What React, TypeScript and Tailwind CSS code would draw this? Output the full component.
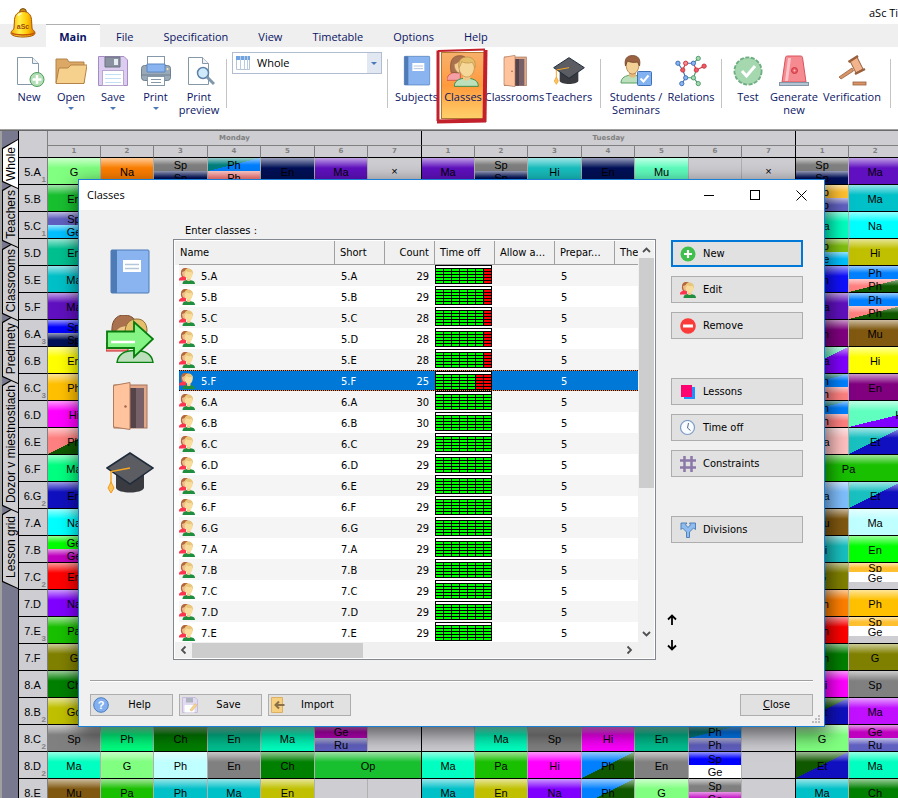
import { Fragment, type ReactNode } from 'react'
import clsx from 'clsx'

/* ---------- icons ---------- */

type IconProps = { className?: string }

function BellLogo() {
  return (
    <svg viewBox="0 0 26 30" className="h-[30px] w-[26px]">
      <defs>
        <linearGradient id="bell" x1="0" x2="1">
          <stop offset="0" stopColor="#f7a800" />
          <stop offset="0.35" stopColor="#fff04a" />
          <stop offset="0.7" stopColor="#ffc400" />
          <stop offset="1" stopColor="#d87400" />
        </linearGradient>
      </defs>
      <circle cx="13" cy="4" r="3.4" fill="#c98a14" stroke="#7a4a10" />
      <path d="M13 3.500c-5 0-8 3-8.500 8L4 20c0 2-3 2.500-3 5 0 2.500 5 4 12 4s12-1.500 12-4c0-2.500-3-3-3-5l-.500-8.500c-.500-5-3.500-8-8.500-8z" fill="url(#bell)" stroke="#a85508" />
      <path d="M2 25c3 2.500 19 2.500 22 0" fill="none" stroke="#c8500a" strokeWidth="1.500" />
      <path d="M8 8c1-2 2-2.500 3.500-2.500" fill="none" stroke="#fffbd0" strokeWidth="1.500" />
      <text x="13" y="21" textAnchor="middle" fontSize="7" fontWeight="700" fill="#a04a10" fontFamily="Liberation Sans, sans-serif">
        aSc
      </text>
    </svg>
  )
}

function BookIcon({ className }: IconProps) {
  return (
    <svg viewBox="0 0 48 48" className={className}>
      <rect x="5" y="2" width="38" height="43" rx="1" fill="#8ab4f0" stroke="#4a7ab8" />
      <rect x="5" y="2" width="6" height="43" fill="#4e7ab5" />
      <rect x="17" y="12" width="18" height="12" fill="#fff" />
      <path d="M19 16.500h14M19 20.500h14" stroke="#b4c6dc" strokeWidth="1.500" />
    </svg>
  )
}

function PeopleIcon({ className }: IconProps) {
  return (
    <svg viewBox="0 0 48 48" className={className}>
      <path d="M0 36c1-7 7-9 12-10h8v12H0z" fill="#f5a0a4" stroke="#c83c3c" />
      <path d="M6 26C3 8 9 1 19 1c8 0 12 4 12 10L18 27z" fill="#a9714d" stroke="#7e4e33" />
      <path d="M11 14c3-1 6-3 8-5v18c-5-1-8-6-8-13z" fill="#f3cd95" stroke="#b08450" strokeWidth="0.800" />
      <path d="M11 47c0-8 6-11 14-12h8c8 1 14 4 14 12z" fill="#bce0bc" stroke="#3f8f4b" strokeWidth="1.500" />
      <path d="M24 28h11v8c-2 3-9 3-11 0z" fill="#efc889" />
      <path d="M18 18C17 9 22 4 30 4s13 5 11 14c0 9-5 15-11 15s-12-6-12-15z" fill="#f6d79a" stroke="#b98e46" />
      <path d="M18 19C16 8 22 3 30 3s14 5 12 16c-2-3-3-6-4-8-6 2-13 1-16-1-1 4-2 6-4 9z" fill="#e6bf6d" stroke="#b98e46" />
    </svg>
  )
}

// 16px version: no outlines, stronger colours
function PeopleSmallIcon() {
  return (
    <svg viewBox="0 0 16 16" className="size-4 shrink-0">
      <path d="M2 7C1.500 2 3 0 6 0c2 0 3.500.500 4 2L6 9H3z" fill="#b5683c" />
      <path d="M3 4l3-1v6C4 9 3 7 3 4z" fill="#f0b88c" />
      <path d="M0 11.500C0 9.500 2.500 9 3.500 8.500L7 9v3.500H0z" fill="#ff3550" />
      <path d="M3.500 16c0-3 2-3.500 4.500-4h3c2.500.500 5 1 5 4z" fill="#1f8f3f" />
      <path d="M8 9h3.500v3.500c-1 .700-2.500.700-3.500 0z" fill="#efc889" />
      <path d="M5.500 5C5.500 2.500 7 1 9.500 1s4.500 1.500 4.200 4.500c0 3-1.700 5.500-4 5.500S5.500 8 5.500 5z" fill="#f8dc9c" />
      <path d="M5.500 7C4.800 3 6.500.500 9.500.500S14.500 3 13.800 6.500L12.500 3.800C10.500 4.500 8.500 4 7 3.300z" fill="#e8c57a" />
    </svg>
  )
}

function ClassesArrowIcon({ className }: IconProps) {
  return (
    <svg viewBox="0 0 48 48" className={className}>
      <path d="M0 36v-8h22v8z" fill="#f5a0a4" stroke="#c81e1e" />
      <path d="M6 18C5 6 10 0 18 0c5 0 9 2 11 5l-5 13z" fill="#a9714d" stroke="#7e4e33" />
      <path d="M10 18c0-3 3-6 10-7l4 7z" fill="#efc889" />
      <path d="M19 18c0-9 4-14 12-14 6 0 10 4 10 12l-4 12H22z" fill="#e6bf6d" stroke="#8f6c30" />
      <path d="M11 47.500c1-8 8-12 18-12s17 4 18 12z" fill="#bce0bc" stroke="#0a820f" strokeWidth="1.500" />
      <path d="M1 16.500h27V7l19 17-19 18v-9H1z" fill="#84f584" stroke="#087a0c" strokeWidth="1.800" />
      <path d="M5 27h24" stroke="#fff" strokeWidth="2.500" />
    </svg>
  )
}

function DoorIcon({ className }: IconProps) {
  return (
    <svg viewBox="0 0 48 48" className={className}>
      <rect x="8" y="3" width="33" height="43" fill="#e0a888" stroke="#a8735a" />
      <rect x="23" y="6" width="15" height="40" fill="#786068" />
      <rect x="23" y="6" width="7" height="40" fill="#544449" />
      <path d="M7.500 3.500L24 .500v47l-16.500-2.500z" fill="#ffc39d" stroke="#b07a5c" />
      <circle cx="19.500" cy="24.500" r="1.200" fill="#a4634a" />
    </svg>
  )
}

function CapIcon({ className }: IconProps) {
  return (
    <svg viewBox="0 0 48 48" className={className}>
      <path d="M10 24v15c2 6 26 6 28 0V24z" fill="#3a3b40" />
      <path d="M1 19L24 4l23 15-23 16z" fill="#5b5d62" stroke="#1f2b3a" strokeWidth="1.500" />
      <path d="M24 19L5 22.500V34" fill="none" stroke="#f5a623" strokeWidth="1.500" />
      <path d="M5 33l3 6-3 5-3-5z" fill="#ffc35a" stroke="#f0981e" />
    </svg>
  )
}

function NewDocIcon() {
  return (
    <svg viewBox="0 0 32 32" className="size-8">
      <path d="M4.500 2.500h15l6 6v21h-21z" fill="#fff" stroke="#8498a8" />
      <path d="M19.500 2.500v6h6" fill="#eef2f5" stroke="#8498a8" />
      <circle cx="24" cy="24.500" r="7" fill="#b4deb4" stroke="#4f9c5f" />
      <path d="M24 20v9M19.500 24.500h9" stroke="#fff" strokeWidth="2.500" />
    </svg>
  )
}

function FolderIcon() {
  return (
    <svg viewBox="0 0 32 32" className="size-8">
      <path d="M1 28V4h11l2 3h15v21z" fill="#dba865" stroke="#b48348" />
      <path d="M1 28.500L4 13h9l3-3h16l-3 18.500z" fill="#f6d08d" stroke="#b48348" />
    </svg>
  )
}

function FloppyIcon({ className }: IconProps) {
  return (
    <svg viewBox="0 0 32 32" className={className}>
      <path d="M1.500 1.500H27l3.500 3.500v25.500h-29z" fill="#dccdf0" stroke="#a58cc4" />
      <path d="M8 2h15v10H8z" fill="#8a91a0" stroke="#6b7280" />
      <rect x="17" y="4" width="4" height="6" fill="#e8edf4" />
      <rect x="5.500" y="15.500" width="21" height="15" fill="#fff" stroke="#b8a8d0" />
      <path d="M8 19.500h16M8 23.500h16M8 27.500h16" stroke="#bfe0f5" />
    </svg>
  )
}

function PrinterIcon() {
  return (
    <svg viewBox="0 0 32 32" className="size-8">
      <rect x="1.500" y="10.500" width="29" height="15" rx="3" fill="#9aa9b8" stroke="#6f8090" />
      <rect x="7.500" y="1.500" width="17" height="9" fill="#fff" stroke="#8498a8" />
      <path d="M7 9h18v8H7z" fill="#8ab4f0" stroke="#5a88c4" />
      <path d="M1 20h30" stroke="#6f8090" />
      <rect x="7.500" y="21.500" width="17" height="9" fill="#fff" stroke="#8498a8" />
      <path d="M11 24.500h10M11 27.500h10" stroke="#8498a8" />
      <circle cx="27.500" cy="14" r="1" fill="#ffe9a0" />
    </svg>
  )
}

function PreviewIcon() {
  return (
    <svg viewBox="0 0 32 32" className="size-8">
      <path d="M5.500 2.500h14l6 6v21h-20z" fill="#fff" stroke="#8498a8" />
      <path d="M19.500 2.500v6h6" fill="#eef2f5" stroke="#8498a8" />
      <circle cx="20" cy="18" r="5.500" fill="#cfeafc" stroke="#5e82a6" strokeWidth="1.500" />
      <path d="M24 22l7 7" stroke="#7f97ad" strokeWidth="3" />
    </svg>
  )
}

function StudentIcon() {
  return (
    <svg viewBox="0 0 32 32" className="size-8">
      <path d="M1 28c0-6 5-7 9-8h4c4 1 9 2 9 8z" fill="#bce0bc" stroke="#58a065" />
      <path d="M9 15h7v6c-2 2-5 2-7 0z" fill="#e3b878" />
      <path d="M6 9c0-5 3-7 6.500-7S19 4 19 9c0 6-3 10-6.500 10S6 15 6 9z" fill="#f3d095" stroke="#a87c44" strokeWidth="0.800" />
      <path d="M5.500 11C4 4 7 .500 12.500.500S21 4 19.500 11L17.500 7c-4 1-8 0-10-1z" fill="#9a6240" stroke="#6f432a" strokeWidth="0.800" />
      <rect x="17.500" y="16.500" width="14" height="14" rx="1" fill="#82b2f2" stroke="#3f72b5" />
      <path d="M20.500 23.500l3 3 5-6" fill="none" stroke="#fff" strokeWidth="2" />
    </svg>
  )
}

function RelationsIcon() {
  const nodes: [number, number, string, string][] = [
    [3, 8, '#8ab4f0', '#3f72b5'], [11, 8, '#f58a90', '#c83a44'], [19, 8, '#8ab4f0', '#3f72b5'], [24, 3, '#a6d8b0', '#4f9c6f'],
    [30, 11, '#f05a64', '#c83a44'], [8, 15, '#f05a64', '#c83a44'], [22, 15, '#f05a64', '#c83a44'], [11, 23, '#8ab4f0', '#3f72b5'],
    [19, 23, '#a6d8b0', '#4f9c6f'], [7, 29, '#8ab4f0', '#3f72b5'], [24, 29, '#a6d8b0', '#4f9c6f'],
  ]
  return (
    <svg viewBox="0 0 33 32" className="size-8">
      <path d="M3 8l5 7M19 8h-8M11 23l-4 6M11 23l-3-8" fill="none" stroke="#3f72b5" strokeWidth="1.200" />
      <path d="M8 15l3-7M19 8l3 7M22 15l8-4" fill="none" stroke="#c83a44" strokeWidth="1.200" />
      <path d="M19 8l5-5M11 23h8l5 6M19 23l3-8" fill="none" stroke="#4f9c6f" strokeWidth="1.200" />
      {nodes.map(([x, y, fill, stroke]) => (
        <circle key={`${x}-${y}`} cx={x} cy={y} r="2.200" fill={fill} stroke={stroke} />
      ))}
    </svg>
  )
}

function TestIcon() {
  return (
    <svg viewBox="0 0 32 32" className="size-8">
      <circle cx="16" cy="16" r="13.500" fill="#9ed2aa" stroke="#6fae80" strokeWidth="2" strokeDasharray="4 1.500" />
      <circle cx="16" cy="16" r="12.500" fill="#a6d8b0" />
      <path d="M10 16l4.500 5L23 11" fill="none" stroke="#fff" strokeWidth="3" />
    </svg>
  )
}

function SirenIcon() {
  return (
    <svg viewBox="0 0 32 32" className="size-8">
      <path d="M4 27L7.500 2.500c0-1 1-1.500 2-1.500h13c1 0 2 .500 2 1.500L28 27z" fill="#f58a90" stroke="#d8545c" />
      <path d="M7 26l3-23h3l-3 23z" fill="#fbc4c8" />
      <circle cx="16.500" cy="15.500" r="3" fill="#ee5a62" stroke="#c83a44" />
      <circle cx="16.500" cy="15.500" r="1" fill="#fbc4c8" />
      <rect x="1.500" y="27.500" width="29" height="3" fill="#b4c4d2" stroke="#8296a8" />
    </svg>
  )
}

function GavelIcon() {
  return (
    <svg viewBox="0 0 32 32" className="size-8">
      <path d="M3 22l13-9 1.500 3L5 24z" fill="#d89468" stroke="#98603c" strokeWidth="0.800" />
      <path d="M14 6l7-4 6 12-7 4z" fill="#f2b48c" stroke="#98603c" />
      <path d="M12.500 7L22 1M19 19l10-5" stroke="#98603c" strokeWidth="2.500" />
      <rect x="17" y="27" width="13" height="3" fill="#d89468" stroke="#98603c" strokeWidth="0.800" />
    </svg>
  )
}

const smallIcons: Record<string, ReactNode> = {
  add: (
    <>
      <circle cx="8" cy="8" r="7.500" fill="#3fbf4c" />
      <path d="M8 4v8M4 8h8" stroke="#fff" strokeWidth="2.200" />
    </>
  ),
  remove: (
    <>
      <circle cx="8" cy="8" r="7.800" fill="#fb3a3a" />
      <path d="M3 8h10" stroke="#fff" strokeWidth="3" />
    </>
  ),
  lessons: (
    <>
      <path d="M4 3h11v12H4z" fill="#1e90ff" />
      <path d="M1 1h11v12H1z" fill="#ff0070" />
    </>
  ),
  clock: (
    <>
      <circle cx="7.500" cy="7.500" r="7" fill="#f8fbff" stroke="#7c9cc8" strokeWidth="1.200" />
      <path d="M8.500 3L7.500 8l3 2.500" fill="none" stroke="#54688c" />
    </>
  ),
  grid: <path d="M4.500 0v16M11.500 0v16M0 4.500h16M0 11.500h16" stroke="#8b78a8" strokeWidth="2.500" />,
  divisions: (
    <path d="M6.500 15.500V10L2.500 6 1 7.500V1h6L5.500 2.800 8 5.500l2.500-2.700L9.500 1H15.500v6.500L13.500 6l-4 4v5.500z" fill="#8fbcf0" stroke="#4878b0" strokeWidth="0.900" />
  ),
  help: (
    <>
      <circle cx="8" cy="8" r="7.300" fill="#82b0ee" stroke="#4a7cc0" />
      <text x="8" y="12" textAnchor="middle" fontSize="11" fontWeight="700" fill="#fff" fontFamily="Liberation Sans, sans-serif">?</text>
    </>
  ),
  save: (
    <>
      <path d="M.500.500H13l2.500 2v13H.500z" fill="#e2daf0" stroke="#c8bcdc" />
      <path d="M4 1h7v4.500H4z" fill="#aeb4c0" />
      <path d="M2.500 8h10v7.500h-10z" fill="#fff" />
      <path d="M8 13l5-6.500 2 1.500-5 6z" fill="#f5d590" stroke="#d8b060" strokeWidth="0.500" />
    </>
  ),
  import: (
    <>
      <path d="M.500.500h11v15H.500z" fill="#f7cf80" stroke="#ddb060" />
      <path d="M4 8h9.500M8 4.500L4.500 8 8 11.500" fill="none" stroke="#8a7048" strokeWidth="2" />
    </>
  ),
}

function SmallIcon({ name }: { name: string }) {
  if (name === 'people') return <PeopleSmallIcon />
  return (
    <svg viewBox="0 0 16 16" className="size-4 shrink-0">
      {smallIcons[name]}
    </svg>
  )
}

function Chevron({ className }: IconProps) {
  return (
    <svg viewBox="0 0 9 6" className={clsx('h-[6px] w-[9px]', className)}>
      <path d="M1 5l3.500-3.500L8 5" fill="none" stroke="#505050" strokeWidth="1.800" />
    </svg>
  )
}

/* ---------- ribbon ---------- */

const menu = ['File', 'Specification', 'View', 'Timetable', 'Options', 'Help']

function RibbonButton({ icon, label, width, arrow }: { icon: ReactNode; label: string; width: string; arrow?: boolean }) {
  return (
    <button className={clsx('flex shrink-0 flex-col items-center text-center leading-[13px]', width)}>
      {icon}
      <span className="mt-[3px] whitespace-pre">{label}</span>
      {arrow && <span className="mt-1 border-x-[3px] border-t-[3px] border-x-transparent border-t-[#4a78b8]" />}
    </button>
  )
}

function Separator() {
  return <div className="mx-[5px] mt-1 h-[49px] w-px shrink-0 bg-[#c4c4c4]" />
}

function Ribbon() {
  return (
    <header className="relative h-[130px] overflow-hidden border-b border-[#a0a0a0] bg-white font-['Open_Sans',sans-serif] text-[11px] text-[#0a1464]">
      <div className="absolute top-2 left-[10px]">
        <BellLogo />
      </div>
      <div className="flex h-6 items-center justify-end overflow-hidden pt-[2px]">
        <span className="w-[29px] whitespace-nowrap text-black">aSc Timetables</span>
      </div>
      <nav className="flex h-[23px] items-stretch bg-[#efefef] pl-[46px]">
        <a href="#main" className="flex w-[54px] items-center justify-center border-t border-[#b0b0b0] bg-white pt-[2px] font-bold">
          Main
        </a>
        <div className="flex items-center gap-[30px] pt-[3px] pl-4">
          {menu.map((item) => (
            <a key={item} href={`#${item.toLowerCase()}`}>
              {item}
            </a>
          ))}
        </div>
      </nav>
      <div className="flex items-start pt-2 pl-2">
        <RibbonButton icon={<NewDocIcon />} label="New" width="w-[42px]" />
        <RibbonButton icon={<FolderIcon />} label="Open" width="w-[42px]" arrow />
        <RibbonButton icon={<FloppyIcon className="size-8" />} label="Save" width="w-[42px]" arrow />
        <RibbonButton icon={<PrinterIcon />} label="Print" width="w-[43px]" arrow />
        <RibbonButton icon={<PreviewIcon />} label={'Print\npreview'} width="w-[44px]" />
        <Separator />
        <label className="relative -mt-[3px] flex h-[22px] w-[150px] shrink-0 items-center border border-[#b0bcd0]">
          <svg viewBox="0 0 14 14" className="absolute left-[3px] size-[14px]">
            <path d="M.500.500h13v13H.500z" fill="#fff" stroke="#b8c4d4" />
            <path d="M0 0h14v4H0z" fill="#6fa4e0" />
            <path d="M4.500 0v14M8.500 0v14M11.500 0v14" stroke="#b8cce4" />
          </svg>
          <select aria-label="View" className="h-full w-full appearance-none bg-transparent pl-6 text-black outline-none">
            <option>Whole</option>
          </select>
          <span className="pointer-events-none absolute inset-y-0 right-0 flex w-[14px] items-center justify-center bg-[#e2e8f2]">
            <span className="border-x-[3px] border-t-[3px] border-x-transparent border-t-[#4a78b8]" />
          </span>
        </label>
        <Separator />
        <RibbonButton icon={<BookIcon className="size-8" />} label="Subjects" width="w-[47px]" />
        <div className="relative -mt-[3px] h-[67px] w-[46px] shrink-0 px-px">
          <div className="flex h-full justify-center border border-[#b07830] bg-linear-to-b from-[#f7b06a] via-[#ff9a3c] via-50% to-[#ffcf6a] pt-[2px]">
            <RibbonButton icon={<PeopleIcon className="size-8" />} label="Classes" width="w-[42px]" />
          </div>
          <svg viewBox="0 0 52 76" className="pointer-events-none absolute -top-1 -left-1 h-[76px] w-[52px]">
            <path d="M2 3L49 1.500" stroke="#c2202a" strokeWidth="2" />
            <path d="M2 2.500V73" stroke="#c2202a" strokeWidth="3" />
            <path d="M49.500 2L48.500 74" stroke="#c2202a" strokeWidth="4" />
            <path d="M1 73.500L50 72.500" stroke="#c2202a" strokeWidth="4" />
          </svg>
        </div>
        <RibbonButton icon={<DoorIcon className="size-8" />} label="Classrooms" width="w-[57px]" />
        <RibbonButton icon={<CapIcon className="size-8" />} label="Teachers" width="w-[52px]" />
        <Separator />
        <RibbonButton icon={<StudentIcon />} label={'Students /\nSeminars'} width="w-[60px]" />
        <RibbonButton icon={<RelationsIcon />} label="Relations" width="w-[50px]" />
        <Separator />
        <RibbonButton icon={<TestIcon />} label="Test" width="w-[42px]" />
        <RibbonButton icon={<SirenIcon />} label={'Generate\nnew'} width="w-[50px]" />
        <RibbonButton icon={<GavelIcon />} label="Verification" width="w-[66px]" />
        <Separator />
      </div>
    </header>
  )
}

/* ---------- timetable behind the dialog ---------- */

const colors: Record<string, string> = {
  lime: 'bg-[#80ff80]',
  orange: 'bg-[#ff8000]',
  gray: 'bg-[#808080]',
  navy: 'bg-[#001058]',
  salmon: 'bg-[#ff8080]',
  purple: 'bg-[#6010c0]',
  teal: 'bg-[#18c0c0]',
  mint: 'bg-[#60ffc0]',
  green: 'bg-[#18c030]',
  amber: 'bg-[#ffc030]',
  slate: 'bg-[#6060c0]',
  sea: 'bg-[#00c0c8]',
  sky: 'bg-[#00c0ff]',
  aqua: 'bg-[#00ffc0]',
  cyan: 'bg-[#00ffff]',
  jade: 'bg-[#00c090]',
  grass: 'bg-[#80c010]',
  olive: 'bg-[#808000]',
  mustard: 'bg-[#c0c000]',
  royal: 'bg-[#1010ff]',
  azure: 'bg-[#0080ff]',
  blue: 'bg-[#0000ff]',
  plum: 'bg-[#800080]',
  brown: 'bg-[#805810]',
  yellow: 'bg-[#ffff00]',
  gold: 'bg-[#ffc000]',
  magenta: 'bg-[#ff00ff]',
  pink: 'bg-[#ffc0c0]',
  spring: 'bg-[#00ff80]',
  leaf: 'bg-[#18c000]',
  ink: 'bg-[#1010c0]',
  baby: 'bg-[#80c0ff]',
  ice: 'bg-[#c0ffff]',
  neon: 'bg-[#00ff00]',
  fuchsia: 'bg-[#c000c0]',
  red: 'bg-[#ff0000]',
  violet: 'bg-[#8000ff]',
  forest: 'bg-[#008000]',
  orchid: 'bg-[#c010ff]',
  white: 'bg-white',
  // two-tone lessons, cut from the lower left to the upper right corner
  tealAzure: 'bg-linear-to-br from-[#008080] from-50% to-[#0080ff] to-50%',
  salmonPine: 'bg-linear-to-br from-[#ff8080] from-50% to-[#105800] to-50%',
  mintViolet: 'bg-linear-to-br from-[#60ffc0] from-50% to-[#8000ff] to-50%',
  tealInk: 'bg-linear-to-br from-[#18c0c0] from-50% to-[#1010c0] to-50%',
  pineInk: 'bg-linear-to-br from-[#105800] from-50% to-[#1010c0] to-50%',
  azurePine: 'bg-linear-to-br from-[#0080ff] from-50% to-[#105800] to-50%',
}

// name, group count, lessons as "Text:color", halves joined by "/", "*n" spans n periods
const rows: [string, string, string][] = [
  ['5.A', '1', 'G:lime Na:orange Sp:gray/Sp:navy Ph:tealAzure/Ph:salmon En:navy Ma:purple × Ma:purple Sp:gray/Sp:navy Hi:teal En:navy Mu:mint - × Sp:gray/Sp:navy Ma:purple -'],
  ['5.B', '', 'En:green -*13 Sp:amber/Sp:slate Ma:sea -'],
  ['5.C', '1', 'Sp:slate/Ge:sky -*13 Ma:aqua Na:cyan -'],
  ['5.D', '', 'En:jade -*13 Sp:grass/Ge:sky Hi:mustard -'],
  ['5.E', '', 'Ma:sea -*13 En:royal Ph:azure/Ph:salmonPine -'],
  ['5.F', '', 'Ma:purple -*13 Ma:purple Ph:azure/Ph:salmonPine -'],
  ['6.A', '3', 'Sp:blue/Sp:navy -*13 En:plum Mu:brown -'],
  ['6.B', '', 'En:yellow -*13 Ma:mintViolet Hi:yellow -'],
  ['6.C', '3', 'Ph:gold -*13 Ph:tealAzure/Ph:salmon En:plum -'],
  ['6.D', '', 'Hi:magenta -*13 Ph:tealAzure/Ph:salmon Hv:mintViolet*2'],
  ['6.E', '', 'Ph:salmonPine -*13 Ma:pink Et:tealInk -'],
  ['6.F', '', 'Ma:spring -*13 Pa:leaf*2 -'],
  ['6.G', '2', 'En:ink -*13 Ma:baby Et:tealInk -'],
  ['7.A', '', 'Na:cyan -*13 Mu:brown Ma:ice -'],
  ['7.B', '', 'Ge:neon/Ge:fuchsia -*13 Hi:teal En:neon -'],
  ['7.C', '2', 'En:red -*13 G:olive Sp:amber/Ge:white/- -'],
  ['7.D', '', 'Na:violet -*13 En:orange Ph:gold -'],
  ['7.E', '3', 'Pa:leaf -*13 En:red Sp:amber/Ge:white/- -'],
  ['7.F', '', 'G:olive -*13 Ch:forest G:olive -'],
  ['8.A', '', 'Ch:forest -*13 Hi:magenta Sp:gray -'],
  ['8.B', '2', 'Go:mustard -*13 Et:pineInk Ma:orchid -'],
  ['8.C', '2', 'Sp:gray Ph:spring Ch:forest En:jade Ma:aqua Ge:fuchsia/Ru:slate - - Ma:aqua Sp:gray Hi:magenta En:jade Ph:tealAzure/Ph:slate - G:lime Ge:fuchsia/Ru:slate -'],
  ['8.D', '2', 'Ma:aqua G:lime Ph:ice En:gray Ch:forest Op:green*2 Ma:aqua Pa:leaf Hi:magenta Ph:azurePine En:gray Sp:blue/Ge:white - Et:pineInk Ma:aqua -'],
  ['8.E', '', 'Mu:brown Pa:leaf Ph:sea Ma:sea En:mustard - - Ma:sea En:mustard Na:violet Ph:azurePine G:lime Sp:gray/Ge:fuchsia - Ma:sea Ch:forest -'],
]

const dayCols = ['w-[53px]', 'w-[53px]', 'w-[54px]', 'w-[53px]', 'w-[54px]', 'w-[53px]', 'w-[54px]']
const periods = [1, 2, 3, 4, 5, 6, 7]

function Lesson({ text }: { text: string }) {
  const [name, color] = text.split(':')
  if (!color) return <div className="flex min-h-0 flex-1 items-center justify-center">{name === '-' ? '' : name}</div>
  return (
    <div className={clsx('relative flex min-h-0 flex-1 items-center justify-center pt-[2px]', colors[color])}>
      {color !== 'white' && <span className="absolute inset-x-0 top-0 h-[10px] max-h-1/2 bg-linear-to-b from-white/60 to-transparent" />}
      <span className="relative">{name}</span>
    </div>
  )
}

function Cells({ spec }: { spec: string }) {
  let col = 0
  return spec.split(' ').map((cell, i) => {
    const [body, span] = cell.split('*')
    col += Number(span ?? 1)
    return (
      <td key={i} colSpan={Number(span ?? 1)} className={clsx('border-r border-b border-b-black p-0', col % 7 === 0 ? 'border-r-black' : 'border-r-[#b0b0b0]')}>
        <div className="flex h-[26px] flex-col overflow-hidden">
          {body.split('/').map((part, j) => (
            <Lesson key={j} text={part} />
          ))}
        </div>
      </td>
    )
  })
}

const tabs = [
  { label: 'Whole', size: 'z-6 h-[50px]', fill: 'bg-white' },
  { label: 'Teachers', size: 'z-5 -mt-2 h-[67px]', fill: 'bg-[#cdcdd2]' },
  { label: 'Classrooms', size: 'z-4 -mt-2 h-[81px]', fill: 'bg-[#cdcdd2]' },
  { label: 'Predmety', size: 'z-3 -mt-2 h-[71px]', fill: 'bg-[#cdcdd2]' },
  { label: 'Dozor v miestnostiach', size: 'z-2 -mt-2 h-[137px]', fill: 'bg-[#cdcdd2]' },
  { label: 'Lesson grid', size: 'z-1 -mt-2 h-[84px]', fill: 'bg-[#cdcdd2]' },
]

function SideTabs() {
  return (
    <div className="isolate flex w-[19px] shrink-0 flex-col border-r border-l-2 border-r-black border-l-[#a0a0a0] bg-[#78798e] pt-2">
      {tabs.map((tab) => (
        <button key={tab.label} className={clsx('relative shrink-0 bg-black [clip-path:polygon(100%_0,100%_100%,0_calc(100%-7px),0_9px)]', tab.size)}>
          <span className={clsx('absolute inset-y-px right-0 left-px flex items-center justify-center [clip-path:polygon(100%_0,100%_100%,0_calc(100%-7px),0_9px)]', tab.fill)}>
            <span className="rotate-180 text-[12px] leading-4 whitespace-nowrap [writing-mode:vertical-rl]">{tab.label}</span>
          </span>
        </button>
      ))}
    </div>
  )
}

function Timetable() {
  return (
    <div className="flex min-h-0 flex-1 overflow-hidden border-t border-[#696969] bg-[#cdcdd2] font-['Liberation_Sans',Arial,sans-serif]">
      <SideTabs />
      <table className="w-[937px] shrink-0 table-fixed border-separate border-spacing-0 self-start text-center text-[11px] leading-[13px] text-black">
        <colgroup>
          <col className="w-[29px]" />
          {[0, 1].map((day) => (
            <Fragment key={day}>
              {dayCols.map((w, i) => (
                <col key={i} className={w} />
              ))}
            </Fragment>
          ))}
          <col className="w-[53px]" />
          <col className="w-[53px]" />
          <col className="w-[54px]" />
        </colgroup>
        <thead className="font-['DejaVu_Sans',sans-serif] text-[7px] leading-[11px] text-[#808080]">
          <tr>
            <th rowSpan={2} className="border-r border-b border-r-[#808080] border-b-black" />
            <th colSpan={7} className="h-[15px] border-r border-b border-r-black border-b-[#808080] p-0">Monday</th>
            <th colSpan={7} className="border-r border-b border-r-black border-b-[#808080] p-0">Tuesday</th>
            <th colSpan={3} className="border-b border-b-[#808080] p-0" />
          </tr>
          <tr>
            {[...periods, ...periods, 1, 2, 3].map((n, i) => (
              <th key={i} className={clsx('h-[12px] border-r border-b border-b-black p-0', n === 7 ? 'border-r-black' : 'border-r-[#808080]')}>
                {n}
              </th>
            ))}
          </tr>
        </thead>
        <tbody>
          {rows.map(([name, groups, spec]) => (
            <tr key={name}>
              <th className="relative border-r border-b border-r-[#808080] border-b-black p-0 pt-[2px] pr-px font-normal">
                {name}
                <span className="absolute right-px bottom-0 text-[8px] leading-[8px] font-bold text-[#808080]">{groups}</span>
              </th>
              <Cells spec={spec} />
            </tr>
          ))}
        </tbody>
      </table>
    </div>
  )
}

/* ---------- classes dialog ---------- */

// name, pupils, days blocked at the end of the week
const classes: [string, number, number][] = [
  ['5.A', 29, 1], ['5.B', 29, 1], ['5.C', 28, 1], ['5.D', 28, 1], ['5.E', 28, 1], ['5.F', 25, 2],
  ['6.A', 30, 0], ['6.B', 30, 0], ['6.C', 29, 0], ['6.D', 29, 0], ['6.E', 29, 0], ['6.F', 29, 0], ['6.G', 29, 0],
  ['7.A', 29, 0], ['7.B', 29, 0], ['7.C', 29, 0], ['7.D', 29, 0], ['7.E', 29, 0],
]

const columns = [
  { title: 'Name', width: 'w-[156px]', cell: 'pl-px' },
  { title: 'Short', width: 'w-[50px]', cell: 'pl-[5px]' },
  { title: 'Count', width: 'w-[50px]', cell: 'pr-[5px] text-right' },
  { title: 'Time off', width: 'w-[60px]', cell: 'pl-[5px]' },
  { title: 'Allow a...', width: 'w-[60px]', cell: 'pl-[5px]' },
  { title: 'Prepar...', width: 'w-[60px]', cell: 'pl-[5px]' },
  { title: 'The first', width: 'w-[60px]', cell: 'pl-[5px]' },
]

function TimeOffGrid({ blocked }: { blocked: number }) {
  return (
    <svg viewBox="0 0 57 19" shapeRendering="crispEdges" className="block h-[19px] w-[57px]">
      <rect width="57" height="19" />
      <rect x="1" y="1" width="55" height="2" fill="#fff" />
      {[0, 1, 2, 3, 4, 5, 6].map((x) =>
        [0, 1, 2, 3, 4].map((y) => (
          <rect key={`${x}${y}`} x={1 + x * 8} y={4 + y * 3} width="7" height="2" fill={x >= 7 - blocked ? '#f00' : '#0f0'} />
        )),
      )}
    </svg>
  )
}

function ClassList() {
  return (
    <div className="flex h-[421px] flex-col border border-[#828790] bg-white p-px">
      <div className="flex min-h-0 flex-1">
        <div className="min-w-0 flex-1 overflow-hidden pl-1">
          <table className="w-[496px] table-fixed border-separate border-spacing-0 leading-[14px]">
            <thead>
              <tr>
                {columns.map((c, i) => (
                  <th
                    key={c.title}
                    className={clsx('h-[24px] border-r border-b border-[#a0a0a0] bg-[#f0f0f0] p-0 pt-px text-left font-normal whitespace-nowrap', c.width, c.cell, i === 0 && 'shadow-[-4px_0_#f0f0f0]')}
                  >
                    {c.title}
                  </th>
                ))}
              </tr>
            </thead>
            <tbody>
              {classes.map(([name, count, blocked], i) => {
                const selected = name === '5.F'
                const td = clsx(
                  'h-[21px] p-0',
                  selected ? 'border-y border-transparent bg-[#0078d7] bg-clip-padding text-white' : i % 2 === 0 ? 'bg-[#f5f5f5]' : 'bg-white',
                )
                return (
                  <tr key={name} className={clsx(selected && 'bg-[repeating-linear-gradient(90deg,#000_0_1px,#ff8728_1px_2px)]')}>
                    <td className={td}>
                      <span className="flex items-center gap-[6px]">
                        <PeopleSmallIcon />
                        <span className="pt-[2px]">{name}</span>
                      </span>
                    </td>
                    <td className={clsx(td, 'pt-[2px] pl-[6px]')}>{name}</td>
                    <td className={clsx(td, 'pt-[2px] pr-[6px] text-right')}>{count}</td>
                    <td className={clsx(td, 'align-top')}>
                      <TimeOffGrid blocked={blocked} />
                    </td>
                    <td className={td} />
                    <td className={clsx(td, 'pt-[2px] pl-[6px]')}>5</td>
                    <td className={td} />
                  </tr>
                )
              })}
            </tbody>
          </table>
        </div>
        <div className="flex w-4 shrink-0 flex-col items-center bg-[#f0f0f0]">
          <span className="flex h-[17px] items-center">
            <Chevron />
          </span>
          <span className="h-[230px] w-[15px] bg-[#cdcdcd]" />
          <span className="mt-auto flex h-[17px] items-center">
            <Chevron className="rotate-180" />
          </span>
        </div>
      </div>
      <div className="flex h-4 shrink-0 items-center bg-[#f0f0f0] pr-4">
        <span className="flex w-[17px] justify-center">
          <Chevron className="-rotate-90" />
        </span>
        <span className="h-[15px] w-[171px] bg-[#cdcdcd]" />
        <span className="ml-auto flex w-[17px] justify-center">
          <Chevron className="rotate-90" />
        </span>
      </div>
    </div>
  )
}

function ActionButton({ icon, label, className }: { icon: string; label: string; className?: string }) {
  return (
    <button className={clsx('flex h-[27px] shrink-0 items-center gap-[7px] border bg-[#e1e1e1] pl-2', className ?? 'border-[#adadad]')}>
      <SmallIcon name={icon} />
      <span className="pt-[2px]">{label}</span>
    </button>
  )
}

function BottomButton({ icon, label }: { icon: string; label: string }) {
  return (
    <button className="flex h-[22px] w-[83px] items-center border border-[#adadad] bg-[#e1e1e1] px-[2px]">
      <SmallIcon name={icon} />
      <span className="flex-1 text-center">{label}</span>
    </button>
  )
}

function ArrowButton({ label, className }: { label: string; className?: string }) {
  return (
    <button aria-label={label} className="flex h-[26px] w-4 items-center justify-center">
      <svg viewBox="0 0 10 11" className={clsx('h-[11px] w-[10px]', className)}>
        <path d="M5 11V1.500M1 5.500l4-4 4 4" fill="none" stroke="#000" strokeWidth="1.800" />
      </svg>
    </button>
  )
}

function ClassesDialog() {
  return (
    <div
      role="dialog"
      aria-label="Classes"
      className="absolute top-[179px] left-[78px] z-10 w-[747px] border border-[#1a7fd6] bg-[#f0f0f0] font-['DejaVu_Sans_Condensed','Open_Sans',sans-serif] text-[11px] text-black shadow-[2px_6px_18px_2px_rgba(0,0,0,0.55)]"
    >
      <div className="flex h-[30px] items-center bg-white pl-2">
        <h1 className="flex-1 font-['Open_Sans',sans-serif]">Classes</h1>
        <button aria-label="Minimize" className="flex w-[46px] justify-center">
          <svg viewBox="0 0 11 11" shapeRendering="crispEdges" className="size-[11px]">
            <path d="M0 5.500h10" stroke="#000" />
          </svg>
        </button>
        <button aria-label="Maximize" className="flex w-[46px] justify-center">
          <svg viewBox="0 0 11 11" shapeRendering="crispEdges" className="size-[11px]">
            <path d="M.500.500h9v9h-9z" fill="none" stroke="#000" />
          </svg>
        </button>
        <button aria-label="Close window" className="flex w-[46px] justify-center">
          <svg viewBox="0 0 11 11" className="size-[11px]">
            <path d="M.500.500l10 10M10.500.500l-10 10" stroke="#000" />
          </svg>
        </button>
      </div>

      <div className="flex">
        <div className="flex w-[94px] shrink-0 flex-col items-center gap-[19px] pt-[38px] pl-2">
          <BookIcon className="size-12" />
          <ClassesArrowIcon className="size-12" />
          <DoorIcon className="size-12" />
          <CapIcon className="size-12" />
        </div>
        <div className="min-w-0 flex-1 pt-[11px]">
          <p className="h-[18px] pt-px pl-3 leading-[18px]">Enter classes :</p>
          <ClassList />
        </div>
        <div className="mr-[21px] ml-[15px] flex w-[132px] shrink-0 flex-col gap-[9px] pt-[30px]">
          <ActionButton icon="add" label="New" className="border-[#0078d7] inset-ring inset-ring-[#0078d7]" />
          <ActionButton icon="people" label="Edit" />
          <ActionButton icon="remove" label="Remove" />
          <ActionButton icon="lessons" label="Lessons" className="mt-[30px] border-[#adadad]" />
          <ActionButton icon="clock" label="Time off" />
          <ActionButton icon="grid" label="Constraints" />
          <ActionButton icon="divisions" label="Divisions" className="mt-[30px] border-[#adadad]" />
          <div className="mt-[54px] -ml-[7px] flex flex-col">
            <ArrowButton label="Move up" />
            <ArrowButton label="Move down" className="rotate-180" />
          </div>
        </div>
      </div>

      <hr className="mx-[11px] mt-[20px] h-[2px] border-t border-b border-t-[#a0a0a0] border-b-white" />
      <div className="flex gap-[6px] px-[11px] pt-3 pb-[10px]">
        <BottomButton icon="help" label="Help" />
        <BottomButton icon="save" label="Save" />
        <BottomButton icon="import" label="Import" />
        <button className="ml-auto h-[22px] w-[73px] border border-[#adadad] bg-[#e1e1e1]">
          <span className="underline">C</span>lose
        </button>
      </div>
      <svg viewBox="0 0 8 8" shapeRendering="crispEdges" className="absolute right-1 bottom-[3px] size-2 fill-[#bcbcbc]">
        <path d="M6 0h2v2H6zM3 3h2v2H3zM6 3h2v2H6zM0 6h2v2H0zM3 6h2v2H3zM6 6h2v2H6z" />
      </svg>
    </div>
  )
}

export default function App() {
  return (
    <div className="relative flex h-screen flex-col overflow-hidden bg-white">
      <Ribbon />
      <Timetable />
      <ClassesDialog />
    </div>
  )
}
